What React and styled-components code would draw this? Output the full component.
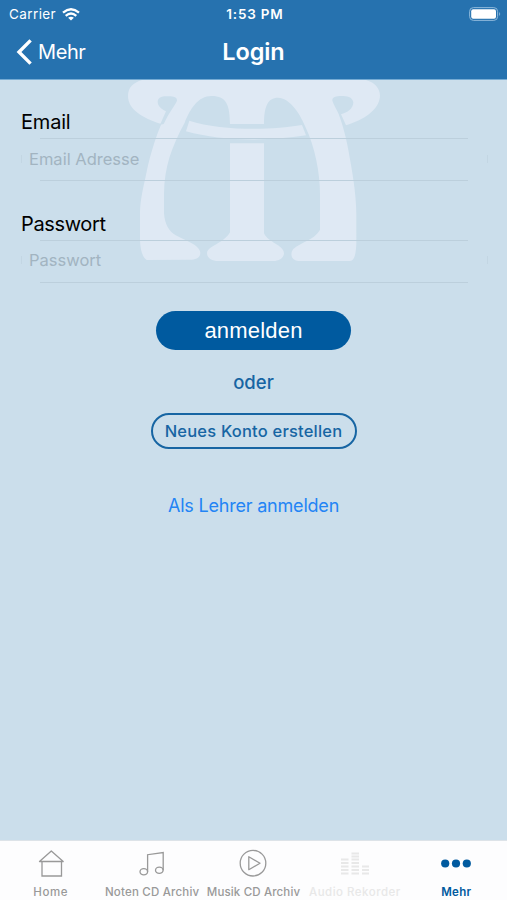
import styled, { createGlobalStyle } from 'styled-components';

const GlobalStyles = createGlobalStyle`
    html {
        --blue: #2672af;
        --darkblue: #005a9f;
        --sky: #cbdeeb;
    }
    * {
        box-sizing: border-box;
    }
    body {
        margin: 0;
        font-family: 'Inter', 'Liberation Sans', sans-serif;
    }
`;

const Screen = styled.div`
    display: flex;
    flex-direction: column;
    width: 507px;
    height: 900px;
    overflow: hidden;
    background: var(--sky);
`;

const Header = styled.header`
    height: 80px;
    background: var(--blue);
    border-bottom: 1px solid #75abd4;
    color: white;
`;

const StatusBar = styled.div`
    display: grid;
    grid-template-columns: 1fr auto 1fr;
    align-items: center;
    height: 28px;
    padding: 0 6px 0 9px;
    .carrier {
        display: flex;
        align-items: center;
        gap: 6px;
    }
    .battery {
        justify-self: end;
        margin-bottom: 1px;
    }
`;

const NavBar = styled.div`
    display: grid;
    grid-template-columns: 1fr auto 1fr;
    align-items: center;
    height: 48px;
    padding: 0 16px;
`;

const BackLink = styled.a`
    display: flex;
    align-items: center;
    gap: 6px;
`;

const Text = styled.span`
    display: block;
    font-family: ${(props) => props.$font || 'inherit'};
    font-size: ${(props) => props.$size}px;
    font-weight: ${(props) => props.$weight || 400};
    letter-spacing: ${(props) => props.$spacing || 0}px;
    line-height: 1.2;
    white-space: nowrap;
`;

const Content = styled.main`
    position: relative;
    flex: 1;
    display: flex;
    flex-direction: column;
    align-items: center;
`;

const Watermark = styled.svg`
    position: absolute;
    top: 0;
    left: 120px;
    width: 270px;
    height: 190px;
    fill: #dfe9f4;
`;

const Form = styled.form`
    position: relative;
    display: flex;
    flex-direction: column;
    align-items: center;
    width: 100%;
    padding-top: 30px;
`;

const Field = styled.label`
    width: 100%;
    height: 101.5px;
    padding: 0 19px 0 21px;
    &:last-of-type {
        height: 99.5px;
    }
    .box {
        display: flex;
        align-items: center;
        justify-content: space-between;
        height: 43px;
        margin-top: 4px;
        padding-bottom: 2px;
        background: linear-gradient(#bccfdc, #bccfdc) 19px 0 / 428px 1px no-repeat,
            linear-gradient(#bccfdc, #bccfdc) 19px 42px / 428px 1px no-repeat;
    }
    .edge {
        width: 1px;
        height: 8px;
        background: #c3d6e3;
    }
    input {
        flex: 1;
        padding: 0 7px;
        border: 0;
        outline: 0;
        background: none;
        font-family: inherit;
        font-size: 16.5px;
        letter-spacing: 0;
    }
    input::placeholder {
        color: #a2b4c1;
        opacity: 1;
    }
`;

const Button = styled.button`
    display: flex;
    align-items: center;
    justify-content: center;
    width: ${(props) => (props.$outline ? 206 : 195)}px;
    height: ${(props) => (props.$outline ? 36 : 39)}px;
    padding: ${(props) => (props.$outline ? '1px 0 0' : '2px 0 0')};
    border: ${(props) => (props.$outline ? '2px solid #1765a3' : '0')};
    border-radius: 20px;
    background: ${(props) => (props.$outline ? 'transparent' : 'var(--darkblue)')};
    color: ${(props) => (props.$outline ? '#1765a3' : 'white')};
    font-family: inherit;
`;

const Or = styled.div`
    margin: 21px 0 20px;
    color: #1765a3;
`;

const TeacherLink = styled.a`
    margin-top: 46px;
    color: #2384f5;
`;

const TabBar = styled.nav`
    display: grid;
    grid-template-columns: repeat(5, 1fr);
    height: 60px;
    border-top: 1px solid #dde3e8;
    background: #fdfdfe;
`;

const Tab = styled.a`
    display: flex;
    flex-direction: column;
    align-items: center;
    color: ${(props) => props.$color};
    svg {
        width: 32px;
        height: 32px;
        margin: 6px 0 7px;
        flex: none;
    }
`;

const stroke = { fill: 'none', stroke: 'currentColor', strokeWidth: 1.3 };

const tabs = [
    {
        label: 'Home',
        color: '#999',
        spacing: 0.6,
        icon: (
            <g {...stroke}>
                <path d="M4.5 14.5 16.3 4 28.2 14.5Z" strokeLinejoin="round" />
                <path d="M7 14.5V29H26.5V14.5" />
            </g>
        ),
    },
    {
        label: 'Noten CD Archiv',
        color: '#999',
        spacing: 0.2,
        icon: (
            <g {...stroke}>
                <ellipse cx="7.8" cy="24.8" rx="3.8" ry="3.1" />
                <ellipse cx="23.3" cy="23.2" rx="3.8" ry="3.1" />
                <path d="M11.6 24.8V7.7L27.2 5.5V23.2" />
            </g>
        ),
    },
    {
        label: 'Musik CD Archiv',
        color: '#999',
        spacing: 0.15,
        icon: (
            <g {...stroke}>
                <circle cx="16" cy="16.2" r="12.8" />
                <path d="M11.8 9.7V22.7L23 16.2Z" strokeLinejoin="round" />
            </g>
        ),
    },
    {
        label: 'Audio Rekorder',
        color: '#e8e8e8',
        spacing: 0.5,
        icon: (
            <path
                d="M2 26.5H9.5M2 23H9.5M2 19.5H9.5M2 16H9.5M2 12.5H9.5M12.5 26.5H20M12.5 23H20M12.5 19.5H20M12.5 16H20M12.5 12.5H20M12.5 9.5H20M12.5 6.5H20M23 26.5H30M23 23H30M23 19.5H30"
                stroke="currentColor"
                strokeWidth="1.8"
            />
        ),
    },
    {
        label: 'Mehr',
        color: '#005a9f',
        weight: 600,
        spacing: 0.3,
        icon: (
            <g fill="currentColor">
                <circle cx="5.2" cy="16.5" r="4.1" />
                <circle cx="16" cy="16.5" r="4.1" />
                <circle cx="26.8" cy="16.5" r="4.1" />
            </g>
        ),
    },
];

function Logo() {
    return (
        <Watermark viewBox="0 30 810 570">
            <path d="M66 30H738C766 38 780 56 780 78C778 120 730 150 678 166L663 133C682 128 700 116 700 97C697 80 680 78 665 78C646 78 636 82 637 92C642 106 650 118 656 132C670 170 680 210 685 240C696 300 709 370 709 435V520C708 550 704 572 690 573H536C512 571 510 549 520 537C545 515 580 512 600 480V370C600 310 585 230 556 170C538 126 508 84 474 83C443 83 432 110 432 162H330C329 108 322 78 274 78C235 78 211 116 194 158C155 230 133 290 132 370V430C134 462 148 486 166 495C195 511 240 525 241 548C241 565 224 570 205 569L80 570C65 560 61 535 60 510V425C61 385 72 345 79 310C92 245 112 190 124 162C70 145 24 120 24 78C24 52 40 38 66 30Z" />
            <path d="M138 124C125 118 112 108 113 94C115 80 130 79 145 79C162 79 172 82 171 92C164 108 150 122 131 162L120 164Z" fill="#cbdeeb" />
            <path d="M208 152C300 182 450 182 546 165L558 196C440 215 300 213 198 184Z" />
            <path d="M330 220H432V490C445 518 492 526 492 550C491 565 476 573 460 573H295C275 573 261 565 261 548C265 527 312 520 330 487Z" />
        </Watermark>
    );
}

export default function App() {
    return (
        <Screen>
            <GlobalStyles />
            <Header>
                <StatusBar>
                    <div className="carrier">
                        <Text $size={13.5} $spacing={0.4}>Carrier</Text>
                        <svg width="18" height="13" viewBox="0 0 18 13" fill="none" stroke="white" strokeWidth="2.3">
                            <path d="M1 4.6Q9-2.2 17 4.6" />
                            <path d="M3.7 7.8Q9 3.2 14.3 7.8" />
                            <path d="M6.1 9.7Q9 7.6 11.9 9.7L9 12.6Z" fill="white" stroke="none" />
                        </svg>
                    </div>
                    <Text $size={13.5} $weight={600} $spacing={0.8}>1:53 PM</Text>
                    <svg className="battery" width="32" height="14" viewBox="0 0 32 14">
                        <rect x="0.6" y="0.6" width="28" height="12.8" rx="3.8" fill="none" stroke="#8db8da" />
                        <rect x="2.2" y="2.3" width="24.8" height="9.4" rx="2" fill="white" />
                        <path d="M30.2 5Q32.2 7 30.2 9Z" fill="#8db8da" />
                    </svg>
                </StatusBar>
                <NavBar>
                    <BackLink>
                        <svg width="16" height="26" viewBox="0 0 16 26" fill="none" stroke="white" strokeWidth="3.4">
                            <path d="M14.6 1.4 3 13 14.6 24.6" />
                        </svg>
                        <Text $size={20} $spacing={-0.4}>Mehr</Text>
                    </BackLink>
                    <Text $size={23.5} $weight={600} $spacing={-0.1}>Login</Text>
                </NavBar>
            </Header>
            <Content>
                <Logo />
                <Form>
                    <Field>
                        <Text $size={20} $spacing={-0.2}>Email</Text>
                        <div className="box">
                            <span className="edge" />
                            <input placeholder="Email Adresse" />
                            <span className="edge" />
                        </div>
                    </Field>
                    <Field>
                        <Text $size={20} $spacing={-0.35}>Passwort</Text>
                        <div className="box">
                            <span className="edge" />
                            <input type="password" placeholder="Passwort" />
                            <span className="edge" />
                        </div>
                    </Field>
                    <Button type="button">
                        <Text $size={22} $spacing={0.2} $font="'Liberation Sans', sans-serif">anmelden</Text>
                    </Button>
                    <Or>
                        <Text $size={18.5} $weight={500}>oder</Text>
                    </Or>
                    <Button type="button" $outline>
                        <Text $size={16.5} $weight={500} $spacing={0.2}>Neues Konto erstellen</Text>
                    </Button>
                    <TeacherLink>
                        <Text $size={18} $spacing={-0.2}>Als Lehrer anmelden</Text>
                    </TeacherLink>
                </Form>
            </Content>
            <TabBar>
                {tabs.map((tab) => (
                    <Tab key={tab.label} $color={tab.color}>
                        <svg viewBox="0 0 32 32">{tab.icon}</svg>
                        <Text $size={11.5} $weight={tab.weight || 500} $spacing={tab.spacing}>{tab.label}</Text>
                    </Tab>
                ))}
            </TabBar>
        </Screen>
    );
}
